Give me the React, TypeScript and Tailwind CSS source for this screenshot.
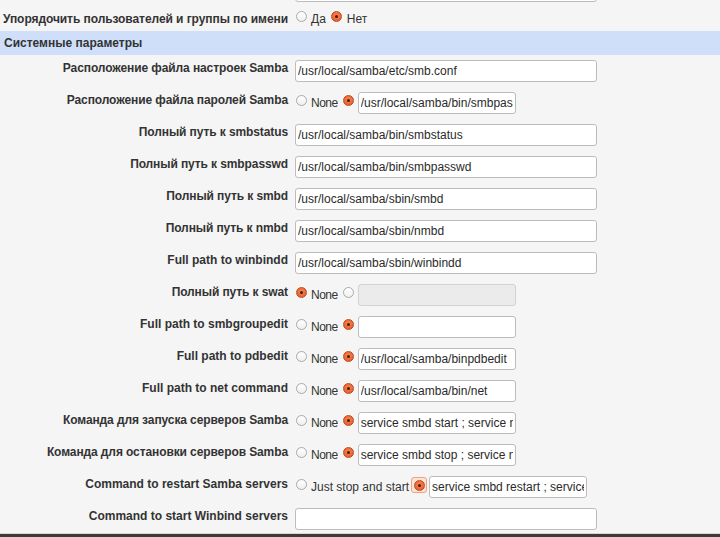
import React from "react";

function Radio({ checked = false, focus = false }: { checked?: boolean; focus?: boolean }) {
  const dot = checked ? (
    <span className="flex h-[11px] w-[11px] items-center justify-center rounded-full border border-[#c24a1c] bg-[radial-gradient(circle_at_50%_40%,#f7875a,#e0531f)]">
      <span className="h-[3px] w-[3px] rounded-full bg-[#4a1a08]" />
    </span>
  ) : (
    <span className="block h-[11px] w-[11px] rounded-full border border-[#a9a9a9] bg-[linear-gradient(#ffffff,#f0f0f0)]" />
  );
  if (focus) {
    return (
      <span className="mb-[4px] flex h-[16px] w-[16px] shrink-0 items-center justify-center rounded-[3px] border border-[#f0a27f] bg-[#fbe3d8]">
        {dot}
      </span>
    );
  }
  return <span className="mb-[5px] shrink-0">{dot}</span>;
}

function TextInput({ value = "", wide = false, disabled = false }: { value?: string; wide?: boolean; disabled?: boolean }) {
  return (
    <input
      readOnly
      value={value}
      disabled={disabled}
      className={
        (wide ? "w-[302px] " : "w-[158px] ") +
        (disabled ? "bg-[#ebebeb] border-[#d2d2d2] " : "bg-white border-[#bcbcbc] ") +
        "h-[22px] shrink-0 rounded-[3px] border px-[2px] text-[12px] text-[#2a2a2a] outline-none"
      }
      style={{ fontFamily: "'Liberation Sans', Arial, sans-serif" }}
    />
  );
}

type Row =
  | { label: string; kind: "wide"; value: string }
  | { label: string; kind: "opt"; noneChecked: boolean; value: string; disabled?: boolean }
  | { label: string; kind: "restart"; value: string };

const rows: Row[] = [
  { label: "Расположение файла настроек Samba", kind: "wide", value: "/usr/local/samba/etc/smb.conf" },
  { label: "Расположение файла паролей Samba", kind: "opt", noneChecked: false, value: "/usr/local/samba/bin/smbpasswd" },
  { label: "Полный путь к smbstatus", kind: "wide", value: "/usr/local/samba/bin/smbstatus" },
  { label: "Полный путь к smbpasswd", kind: "wide", value: "/usr/local/samba/bin/smbpasswd" },
  { label: "Полный путь к smbd", kind: "wide", value: "/usr/local/samba/sbin/smbd" },
  { label: "Полный путь к nmbd", kind: "wide", value: "/usr/local/samba/sbin/nmbd" },
  { label: "Full path to winbindd", kind: "wide", value: "/usr/local/samba/sbin/winbindd" },
  { label: "Полный путь к swat", kind: "opt", noneChecked: true, value: "", disabled: true },
  { label: "Full path to smbgroupedit", kind: "opt", noneChecked: false, value: "" },
  { label: "Full path to pdbedit", kind: "opt", noneChecked: false, value: "/usr/local/samba/binpdbedit" },
  { label: "Full path to net command", kind: "opt", noneChecked: false, value: "/usr/local/samba/bin/net" },
  { label: "Команда для запуска серверов Samba", kind: "opt", noneChecked: false, value: "service smbd start ; service nmbd start" },
  { label: "Команда для остановки серверов Samba", kind: "opt", noneChecked: false, value: "service smbd stop ; service nmbd stop" },
  { label: "Command to restart Samba servers", kind: "restart", value: "service smbd restart ; service nmbd restart" },
  { label: "Command to start Winbind servers", kind: "wide", value: "" },
];

function Label({ children, cyr = false }: { children: React.ReactNode; cyr?: boolean }) {
  return (
    <div
      className={
        (cyr ? "tracking-[-0.1px] " : "") +
        "w-[288px] shrink-0 pt-[6px] text-right text-[12px] font-bold leading-[14px] text-[#333]"
      }
    >
      {children}
    </div>
  );
}

export default function App() {
  return (
    <div
      className="flex h-[537px] w-[720px] flex-col overflow-hidden bg-[#f5f5f5] text-[#333]"
      style={{ fontFamily: "'Liberation Sans', Arial, sans-serif" }}
    >
      <div className="min-h-0 flex-1 overflow-hidden">
        {/* partially scrolled-off row */}
        <div className="-mt-[25px] flex h-[32px]">
          <Label>&nbsp;</Label>
          <div className="flex items-center pl-[7px]">
            <TextInput wide value="" />
          </div>
        </div>

        <div className="flex h-[24px]">
          <div className="w-[288px] shrink-0 pt-[5px] text-right text-[12px] font-bold leading-[14px] tracking-[-0.07px]">
            Упорядочить пользователей и группы по имени
          </div>
          <div className="flex items-center pl-[8px] text-[12px]">
            <Radio />
            <span className="ml-[4px] mr-[5px]">Да</span>
            <Radio checked />
            <span className="ml-[5px]">Нет</span>
          </div>
        </div>

        <div className="flex h-[24px] items-center bg-[#cfdffa] pl-[4px] text-[12px] font-bold">
          Системные параметры
        </div>

        {rows.map((r, i) => (
          <div key={i} className="flex h-[32px]">
            <Label cyr={/[а-яА-Я]/.test(r.label)}>{r.label}</Label>
            {r.kind === "wide" && (
              <div className="flex items-center pl-[7px]">
                <TextInput wide value={r.value} />
              </div>
            )}
            {r.kind === "opt" && (
              <div className="flex items-center pl-[8px] text-[12px]">
                <Radio checked={r.noneChecked} />
                <span className="ml-[4px] mr-[5px] tracking-[-0.5px]">None</span>
                <Radio checked={!r.noneChecked} />
                <span className="ml-[4px] flex">
                  <TextInput value={r.value} disabled={r.disabled} />
                </span>
              </div>
            )}
            {r.kind === "restart" && (
              <div className="flex items-center pl-[8px] text-[12px]">
                <Radio />
                <span className="ml-[4px] mr-[2px]">Just stop and start</span>
                <Radio checked focus />
                <span className="ml-[2px] flex">
                  <TextInput value={r.value} />
                </span>
              </div>
            )}
          </div>
        ))}
      </div>
      <div className="h-[4px] shrink-0 border-t border-[#d6d6d6] bg-[#3b3b3b]" />
    </div>
  );
}
